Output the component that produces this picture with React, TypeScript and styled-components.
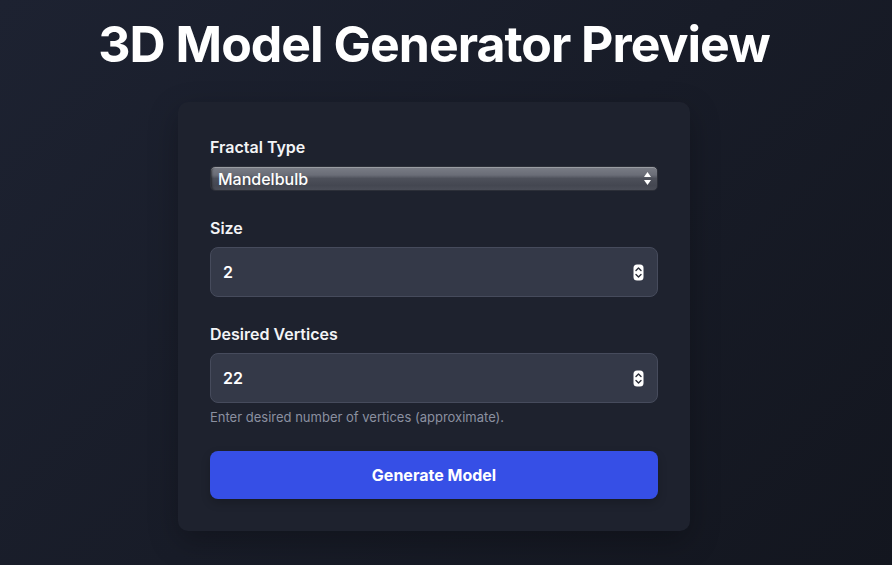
import React, { useState } from 'react';
import styled, { createGlobalStyle } from 'styled-components';

const GlobalStyle = createGlobalStyle`
    html, body {
        margin: 0;
        padding: 0;
    }
    body {
        font-family: Inter, 'Noto Sans', sans-serif;
        color: #ffffff;
        background: linear-gradient(135deg, #1d2231 0%, #181c28 50%, #13161f 100%);
        min-height: 565px;
    }
`;

const Page = styled.div`
    display: flex;
    flex-direction: column;
    align-items: center;
    padding: 0 24px 40px 0;
    min-height: 565px;
    box-sizing: border-box;
`;

const Title = styled.h1`
    margin: 14px 0 28px;
    font-size: 50px;
    font-weight: 700;
    line-height: 60px;
    letter-spacing: -0.02em;
    color: #ffffff;
`;

const Card = styled.form`
    width: 512px;
    box-sizing: border-box;
    padding: 32px;
    background: #1e222e;
    border-radius: 10px;
    box-shadow: 0 10px 30px rgba(0, 0, 0, 0.25);
    display: flex;
    flex-direction: column;
`;

const Field = styled.div`
    display: flex;
    flex-direction: column;
    margin-bottom: 24px;
`;

const Label = styled.label`
    font-size: 16px;
    font-weight: 600;
    line-height: 26px;
    margin-bottom: 6px;
    color: #f3f4f6;
`;

const SelectWrap = styled.div`
    position: relative;
    height: 25px;
`;

const NativeSelect = styled.select`
    appearance: none;
    -webkit-appearance: none;
    width: 100%;
    height: 25px;
    box-sizing: border-box;
    margin: 0;
    padding: 0 28px 0 7px;
    border: 1px solid #2c2f38;
    border-radius: 5px;
    font-family: Inter, 'Noto Sans', sans-serif;
    font-size: 16px;
    font-weight: 500;
    color: #ffffff;
    background:
        linear-gradient(180deg, #7a7d86 0%, #6a6d77 35%, #4d505a 50%, #444751 80%, #4a4d57 100%);
    box-shadow: inset 0 1px 0 rgba(255, 255, 255, 0.25), inset 3px 0 2px -2px rgba(0, 0, 0, 0.5);
    outline: none;
`;

const SelectArrows = styled.svg`
    position: absolute;
    right: 6px;
    top: 5px;
    pointer-events: none;
`;

const InputWrap = styled.div`
    position: relative;
`;

const NumberInput = styled.input`
    width: 100%;
    height: 50px;
    box-sizing: border-box;
    padding: 0 40px 0 12px;
    border: 1px solid #464b5c;
    border-radius: 8px;
    background: #343948;
    color: #ffffff;
    font-family: Inter, 'Noto Sans', sans-serif;
    font-size: 16px;
    font-weight: 600;
    outline: none;
    appearance: textfield;
    -moz-appearance: textfield;
    &::-webkit-inner-spin-button,
    &::-webkit-outer-spin-button {
        -webkit-appearance: none;
        margin: 0;
    }
`;

const Spinner = styled.svg`
    position: absolute;
    right: 14px;
    top: 17px;
    pointer-events: none;
`;

const Help = styled.div`
    margin-top: 4px;
    font-size: 13px;
    line-height: 20px;
    color: #8b90a0;
`;

const Button = styled.button`
    height: 48px;
    border: none;
    border-radius: 8px;
    background: #364fe6;
    color: #ffffff;
    font-family: Inter, 'Noto Sans', sans-serif;
    font-size: 16px;
    font-weight: 700;
    cursor: pointer;
    box-shadow: 0 4px 10px rgba(0, 0, 0, 0.2);
`;

const SpinIcon = () => (
    <Spinner width="11" height="17" viewBox="0 0 11 17">
        <rect x="0.5" y="0.5" width="10" height="16" rx="3.5" fill="#ffffff" />
        <path d="M3 6.5 L5.5 4 L8 6.5" fill="none" stroke="#2a2d38" strokeWidth="1.4" strokeLinecap="round" strokeLinejoin="round" />
        <path d="M3 10.5 L5.5 13 L8 10.5" fill="none" stroke="#2a2d38" strokeWidth="1.4" strokeLinecap="round" strokeLinejoin="round" />
    </Spinner>
);

const NumberField = (props: { label: string; value: string; onChange: (v: string) => void; help?: string }) => {
    const { label, value, onChange, help } = props;
    return (
        <Field>
            <Label>{label}</Label>
            <InputWrap>
                <NumberInput type="number" value={value} onChange={e => onChange(e.target.value)} />
                <SpinIcon />
            </InputWrap>
            {help && <Help>{help}</Help>}
        </Field>
    );
};

const App = () => {
    const [fractal, setFractal] = useState('mandelbulb');
    const [size, setSize] = useState('2');
    const [vertices, setVertices] = useState('22');

    return (
        <>
            <GlobalStyle />
            <Page>
                <Title>3D Model Generator Preview</Title>
                <Card onSubmit={e => e.preventDefault()}>
                    <Field>
                        <Label>Fractal Type</Label>
                        <SelectWrap>
                            <NativeSelect value={fractal} onChange={e => setFractal(e.target.value)}>
                                <option value="mandelbulb">Mandelbulb</option>
                                <option value="mandelbox">Mandelbox</option>
                                <option value="sierpinski">Sierpinski</option>
                            </NativeSelect>
                            <SelectArrows width="9" height="15" viewBox="0 0 9 15">
                                <path d="M4.5 1 L8 6 L1 6 Z" fill="#ffffff" />
                                <path d="M4.5 14 L8 9 L1 9 Z" fill="#ffffff" />
                            </SelectArrows>
                        </SelectWrap>
                    </Field>
                    <NumberField label="Size" value={size} onChange={setSize} />
                    <NumberField
                        label="Desired Vertices"
                        value={vertices}
                        onChange={setVertices}
                        help="Enter desired number of vertices (approximate)."
                    />
                    <Button type="submit">Generate Model</Button>
                </Card>
            </Page>
        </>
    );
};

export default App;
